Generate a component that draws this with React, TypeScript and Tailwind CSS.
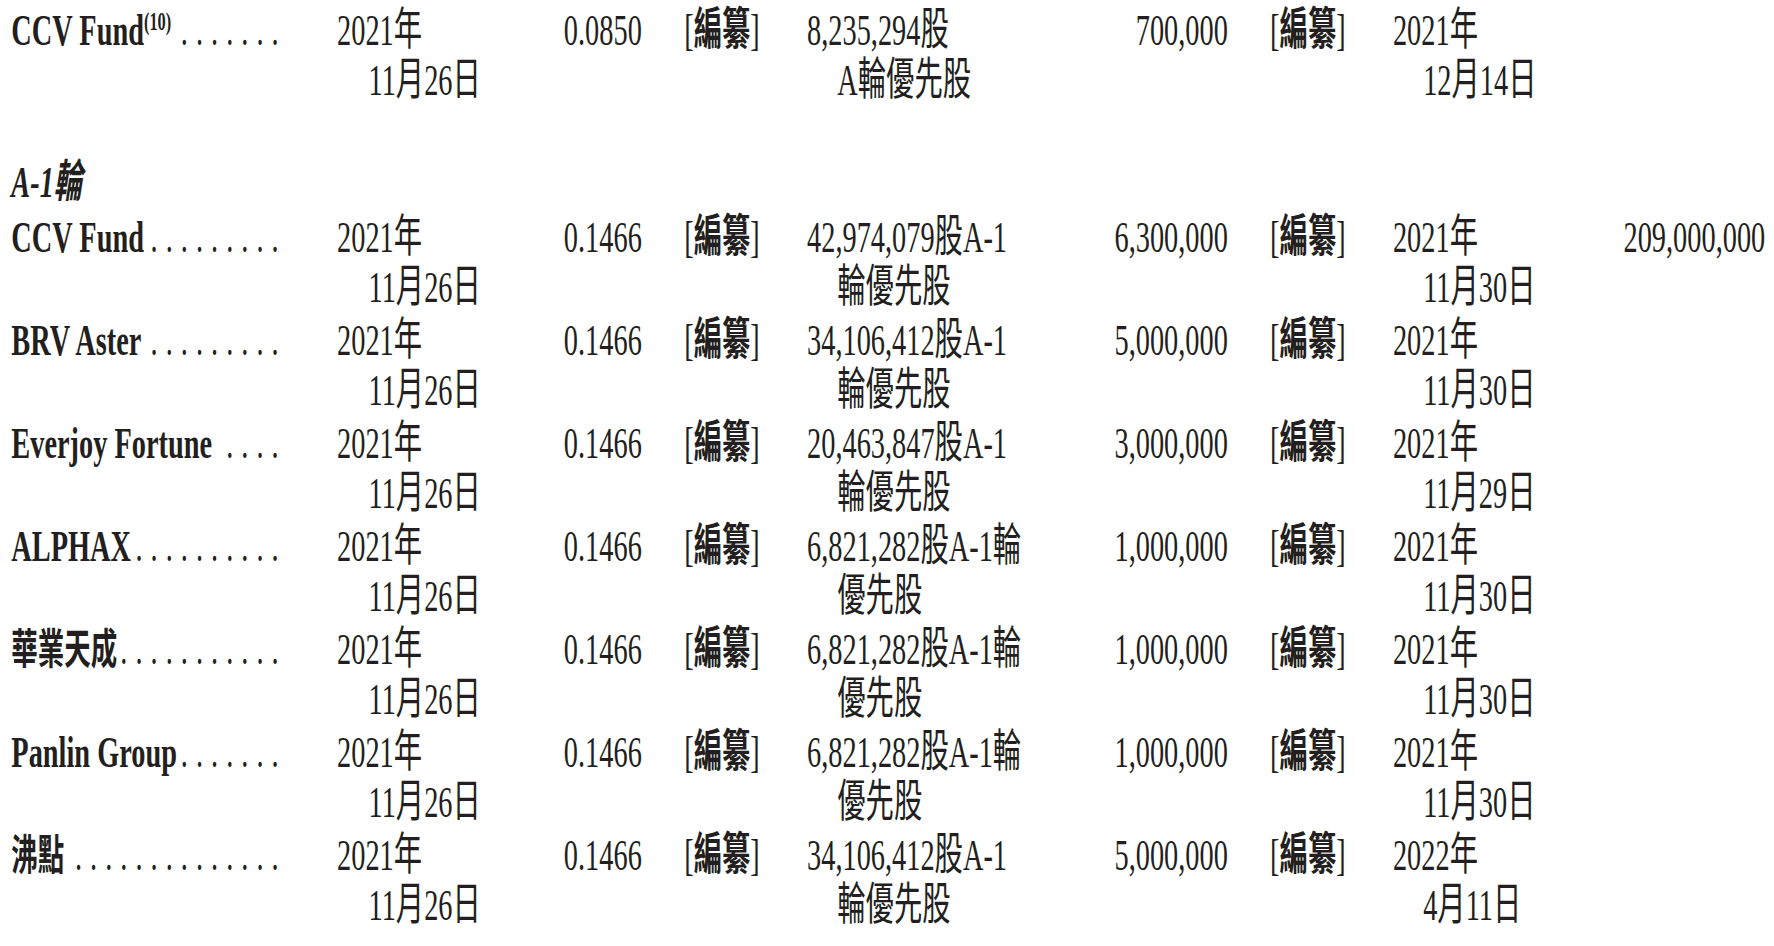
type Row = {
  name: string;
  sup?: string;
  cjk?: boolean;
  dots: number;
  price: string;
  shares: [string, string];
  amount: string;
  settled: [string, string];
  total?: string;
};

const seriesA: Row[] = [
  {
    name: "CCV Fund",
    sup: "(10)",
    dots: 7,
    price: "0.0850",
    shares: ["8,235,294股", "A輪優先股"],
    amount: "700,000",
    settled: ["2021年", "12月14日"],
  },
];

const seriesA1: Row[] = [
  {
    name: "CCV Fund",
    dots: 9,
    price: "0.1466",
    shares: ["42,974,079股A-1", "輪優先股"],
    amount: "6,300,000",
    settled: ["2021年", "11月30日"],
    total: "209,000,000",
  },
  {
    name: "BRV Aster",
    dots: 9,
    price: "0.1466",
    shares: ["34,106,412股A-1", "輪優先股"],
    amount: "5,000,000",
    settled: ["2021年", "11月30日"],
  },
  {
    name: "Everjoy Fortune",
    dots: 4,
    price: "0.1466",
    shares: ["20,463,847股A-1", "輪優先股"],
    amount: "3,000,000",
    settled: ["2021年", "11月29日"],
  },
  {
    name: "ALPHAX",
    dots: 10,
    price: "0.1466",
    shares: ["6,821,282股A-1輪", "優先股"],
    amount: "1,000,000",
    settled: ["2021年", "11月30日"],
  },
  {
    name: "華業天成",
    cjk: true,
    dots: 11,
    price: "0.1466",
    shares: ["6,821,282股A-1輪", "優先股"],
    amount: "1,000,000",
    settled: ["2021年", "11月30日"],
  },
  {
    name: "Panlin Group",
    dots: 7,
    price: "0.1466",
    shares: ["6,821,282股A-1輪", "優先股"],
    amount: "1,000,000",
    settled: ["2021年", "11月30日"],
  },
  {
    name: "沸點",
    cjk: true,
    dots: 14,
    price: "0.1466",
    shares: ["34,106,412股A-1", "輪優先股"],
    amount: "5,000,000",
    settled: ["2022年", "4月11日"],
  },
];

function Leader({ count }: { count: number }) {
  return (
    <span className="tracking-[0.75px]">{Array(count).fill(".").join(" ")}</span>
  );
}

function Redacted() {
  return (
    <div className="h-[50px] whitespace-nowrap">
      [<span className="font-bold">編纂</span>]
    </div>
  );
}

function TableRow({ row }: { row: Row }) {
  return (
    <div className="grid h-[103px] grid-cols-[517px_360px_191px_195px_419px_249px_262px_289px_302px]">
      {/* name + dot leader */}
      <div className="flex h-[50px] w-[425px] items-baseline justify-between whitespace-nowrap">
        <span className={row.cjk ? "text-[42px] font-bold" : "font-bold"}>
          {row.name}
          {row.sup && <sup className="top-[-15px] text-[26px]">{row.sup}</sup>}
        </span>
        <Leader count={row.dots} />
      </div>

      {/* issue date */}
      <div className="whitespace-nowrap">
        <div className="h-[50px]">2021年</div>
        <div className="h-[50px] pl-[50px]">11月26日</div>
      </div>

      <div className="h-[50px]">{row.price}</div>

      <Redacted />

      {/* shares */}
      <div className="whitespace-nowrap">
        <div className="h-[50px]">{row.shares[0]}</div>
        <div className="h-[50px] pl-[48px]">{row.shares[1]}</div>
      </div>

      <div className="h-[50px] text-right">{row.amount}</div>

      <div className="pl-[67px]">
        <Redacted />
      </div>

      {/* settlement date */}
      <div className="whitespace-nowrap">
        <div className="h-[50px]">{row.settled[0]}</div>
        <div className="h-[50px] pl-[48px]">{row.settled[1]}</div>
      </div>

      <div className="h-[50px] text-right">{row.total ?? ""}</div>
    </div>
  );
}

export default function App() {
  return (
    <div className="h-[946px] w-[1774px] overflow-hidden bg-white text-[#231f20]">
      {/* the print face is very condensed, so the whole table is squeezed horizontally */}
      <div className="w-[2816px] origin-top-left scale-x-[0.63] pl-[18px] pt-[5px] font-['Liberation_Serif','Noto_Sans_CJK_TC',serif] text-[45px] leading-[50px]">
        {seriesA.map((row, i) => (
          <TableRow key={`a-${i}`} row={row} />
        ))}

        <div className="h-[104px] pt-[49px]">
          <div className="h-[50px] font-bold italic">A-1輪</div>
        </div>

        {seriesA1.map((row, i) => (
          <TableRow key={`a1-${i}`} row={row} />
        ))}
      </div>
    </div>
  );
}
